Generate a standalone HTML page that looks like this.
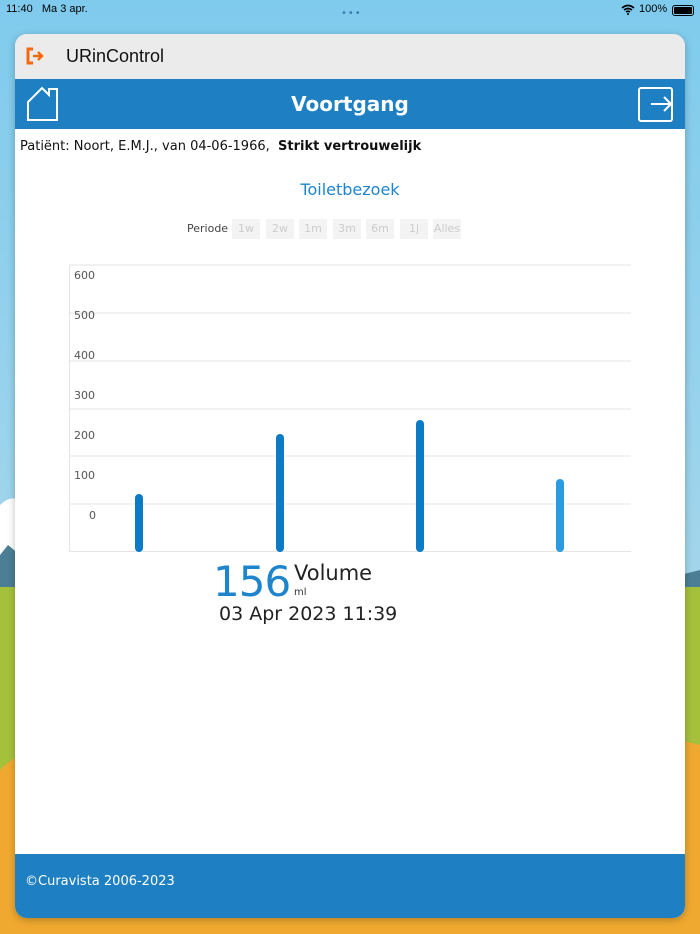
<!DOCTYPE html>
<html><head><meta charset="utf-8"><style>
*{margin:0;padding:0;box-sizing:border-box}
body{width:700px;height:934px;overflow:hidden;font-family:"DejaVu Sans","Liberation Sans",sans-serif;position:relative;background:#7fcbed}
.bg{position:absolute;left:0;top:0;width:700px;height:934px}
.status{position:absolute;top:3px;left:6px;font-size:11px;color:#000;font-family:"Liberation Sans",sans-serif}
.card{position:absolute;left:15px;top:34px;width:670px;height:884px;background:#fff;border-radius:12px;overflow:hidden;box-shadow:0 2px 8px rgba(0,0,0,.25)}
.top{height:45px;background:#ebebeb;position:relative}
.top span{position:absolute;left:51px;top:12px;font-size:18px;font-family:"Liberation Sans",sans-serif;color:#111}
.bar{height:50px;background:#1e80c3;position:relative;color:#fff;text-align:center;font-weight:bold;font-size:20px;line-height:50px}
.pat{position:absolute;left:5px;top:105px;font-size:13px;color:#111}
.foot{position:absolute;left:0;top:820px;width:670px;height:64px;background:#1e80c3;color:#fff;font-size:13px;padding:20px 0 0 10px}
.t{position:absolute;font-size:11px;color:#555}
.btn{position:absolute;top:185px;height:20px;background:#f3f3f3;color:#ccc;font-size:11px;line-height:19px;text-align:center;width:28px}
</style></head><body>
<svg class="bg" viewBox="0 0 700 934">
<defs><linearGradient id="s" x1="0" y1="0" x2="0" y2="1"><stop offset="0" stop-color="#7fcbed"/><stop offset="1" stop-color="#b9dcea"/></linearGradient></defs>
<rect width="700" height="934" fill="url(#s)"/>
<path d="M0 505 Q10 495 20 500 L20 560 L0 560Z" fill="#fff"/>
<path d="M0 555 L8 545 L20 555 L20 590 L0 590Z" fill="#4c7f96"/>
<path d="M680 575 L700 570 L700 590 L680 590Z" fill="#4c7f96"/>
<rect x="0" y="587" width="700" height="200" fill="#a5c13c"/>
<path d="M0 770 Q10 760 20 755 L20 934 L0 934Z M680 740 L700 745 L700 934 L680 934Z" fill="#f0a930"/>
<rect x="0" y="915" width="700" height="19" fill="#f0a930"/>
</svg>
<div class="status">11:40&nbsp;&nbsp; Ma 3 apr.</div>
<div style="position:absolute;left:341px;top:8px;font-size:10px;color:#3a7fb0;letter-spacing:1px">•••</div>
<div class="status" style="left:639px">100%</div>
<svg style="position:absolute;left:621px;top:4px" width="14" height="11" viewBox="0 0 14 11"><path d="M1 4 Q7 -1 13 4 M3 6 Q7 3 11 6 M5 8 Q7 6.5 9 8" stroke="#000" stroke-width="1.6" fill="none"/><circle cx="7" cy="10" r="1" fill="#000"/></svg>
<div style="position:absolute;left:672px;top:5px;width:22px;height:11px;border:1px solid #000;border-radius:3px;padding:1px"><div style="background:#000;height:100%;border-radius:1px"></div></div>
<div class="card">
<div class="top"><svg style="position:absolute;left:11px;top:13px" width="20" height="18" viewBox="0 0 20 18"><path d="M7 2 H2 V16 H7" stroke="#f26a10" stroke-width="3" fill="none"/><path d="M7 9 H16 M12 5 L16 9 L12 13" stroke="#f26a10" stroke-width="2.5" fill="none"/></svg><span>URinControl</span></div>
<div class="bar">Voortgang
<svg style="position:absolute;left:11px;top:7px" width="34" height="36" viewBox="0 0 34 36"><path d="M2 34 V16 L16 2 L23 9 V3 H31 V34 Z" stroke="#fff" stroke-width="2" fill="none"/></svg>
<svg style="position:absolute;left:623px;top:8px" width="36" height="35" viewBox="0 0 36 35"><rect x="1" y="1" width="33" height="33" rx="2" stroke="#fff" stroke-width="2" fill="none"/><path d="M13 17 H33 M26 10 L33 17 L26 24" stroke="#fff" stroke-width="2" fill="none"/></svg>
</div>
<div class="pat">Patiënt: Noort, E.M.J., van 04-06-1966,&nbsp; <b>Strikt vertrouwelijk</b></div>
<div style="position:absolute;left:0;width:670px;top:146px;text-align:center;color:#1e84cc;font-size:16px">Toiletbezoek</div>
<div class="t" style="left:172px;top:188px;color:#444">Periode</div>
<div class="btn" style="left:217px">1w</div><div class="btn" style="left:251px">2w</div><div class="btn" style="left:284px">1m</div><div class="btn" style="left:318px">3m</div><div class="btn" style="left:351px">6m</div><div class="btn" style="left:385px">1j</div><div class="btn" style="left:418px">Alles</div>
<svg style="position:absolute;left:0;top:0" width="670" height="884">
<g stroke="#e4e4e4" stroke-width="1">
<line x1="54" y1="231" x2="616" y2="231"/><line x1="54" y1="279" x2="616" y2="279"/><line x1="54" y1="327" x2="616" y2="327"/><line x1="54" y1="375" x2="616" y2="375"/><line x1="54" y1="422" x2="616" y2="422"/><line x1="54" y1="470" x2="616" y2="470"/><line x1="54" y1="517.5" x2="616" y2="517.5"/><line x1="54.5" y1="231" x2="54.5" y2="518"/></g>
<g font-size="11" fill="#555" font-family="DejaVu Sans,sans-serif">
<text x="59" y="245">600</text><text x="59" y="285">500</text><text x="59" y="325">400</text><text x="59" y="365">300</text><text x="59" y="405">200</text><text x="59" y="445">100</text><text x="74" y="485">0</text></g>
<g stroke-linecap="round" stroke-width="8">
<line x1="124" y1="464" x2="124" y2="514" stroke="#0b7bc5"/>
<line x1="265" y1="404" x2="265" y2="514" stroke="#0b7bc5"/>
<line x1="405" y1="390" x2="405" y2="514" stroke="#0b7bc5"/>
<line x1="545" y1="449" x2="545" y2="514" stroke="#2a9be0"/></g>
</svg>
<div style="position:absolute;left:198px;top:524px;font-size:42px;color:#1e84cc;line-height:48px;letter-spacing:-1px">156</div>
<div style="position:absolute;left:279px;top:527px;font-size:21px;color:#222">Volume</div>
<div style="position:absolute;left:279px;top:553px;font-size:10px;color:#333">ml</div>
<div style="position:absolute;left:204px;top:569px;font-size:19px;color:#222">03 Apr 2023 11:39</div>
<div class="foot">©Curavista 2006-2023</div>
</div>
</body></html>
